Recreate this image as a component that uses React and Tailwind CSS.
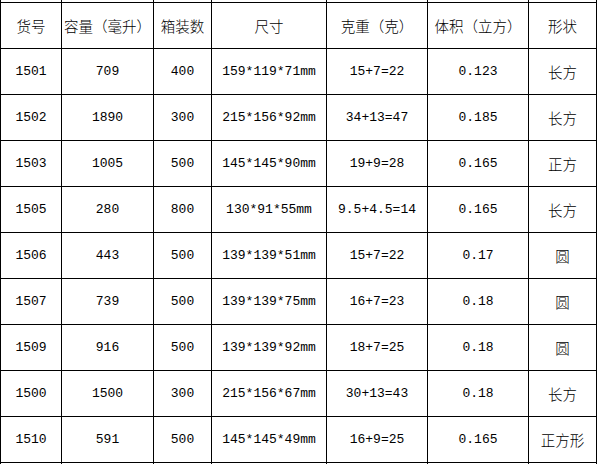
const headers = ['货号', '容量（毫升）', '箱装数', '尺寸', '克重（克）', '体积（立方）', '形状']

const rows = [
  ['1501', '709', '400', '159*119*71mm', '15+7=22', '0.123', '长方'],
  ['1502', '1890', '300', '215*156*92mm', '34+13=47', '0.185', '长方'],
  ['1503', '1005', '500', '145*145*90mm', '19+9=28', '0.165', '正方'],
  ['1505', '280', '800', '130*91*55mm', '9.5+4.5=14', '0.165', '长方'],
  ['1506', '443', '500', '139*139*51mm', '15+7=22', '0.17', '圆'],
  ['1507', '739', '500', '139*139*75mm', '16+7=23', '0.18', '圆'],
  ['1509', '916', '500', '139*139*92mm', '18+7=25', '0.18', '圆'],
  ['1500', '1500', '300', '215*156*67mm', '30+13=43', '0.18', '长方'],
  ['1510', '591', '500', '145*145*49mm', '16+9=25', '0.165', '正方形'],
]

const cjk = { fontFamily: '"Noto Sans CJK SC", "Noto Sans", sans-serif' }
const mono = { fontFamily: '"Liberation Mono", "Noto Sans CJK SC", monospace' }

export default function App() {
  return (
    <div className="w-[598px] h-[464px] bg-white text-black overflow-hidden">
      <div className="grid grid-cols-[61px_92px_58px_115px_101px_101px_68px] border-l border-black">
        {headers.map((h, i) => (
          <div key={'s' + i} className="h-[2px] border-r border-black" />
        ))}
        {headers.map((h, i) => (
          <div
            key={'h' + i}
            className="h-[47px] border-t border-r border-b border-black flex items-center justify-center text-[14.5px] font-light whitespace-nowrap"
            style={cjk}
          >
            {h}
          </div>
        ))}
        {rows.map((r, ri) =>
          r.map((c, ci) => (
            <div
              key={ri + '-' + ci}
              className={
                'h-[46px] border-r border-b border-black flex items-center justify-center whitespace-nowrap ' +
                (ci === 6 ? 'text-[14.5px] font-light' : 'text-[13px]')
              }
              style={ci === 6 ? cjk : mono}
            >
              {c}
            </div>
          ))
        )}
        {headers.map((h, i) => (
          <div key={'e' + i} className="h-[1px] border-r border-black" />
        ))}
      </div>
    </div>
  )
}
